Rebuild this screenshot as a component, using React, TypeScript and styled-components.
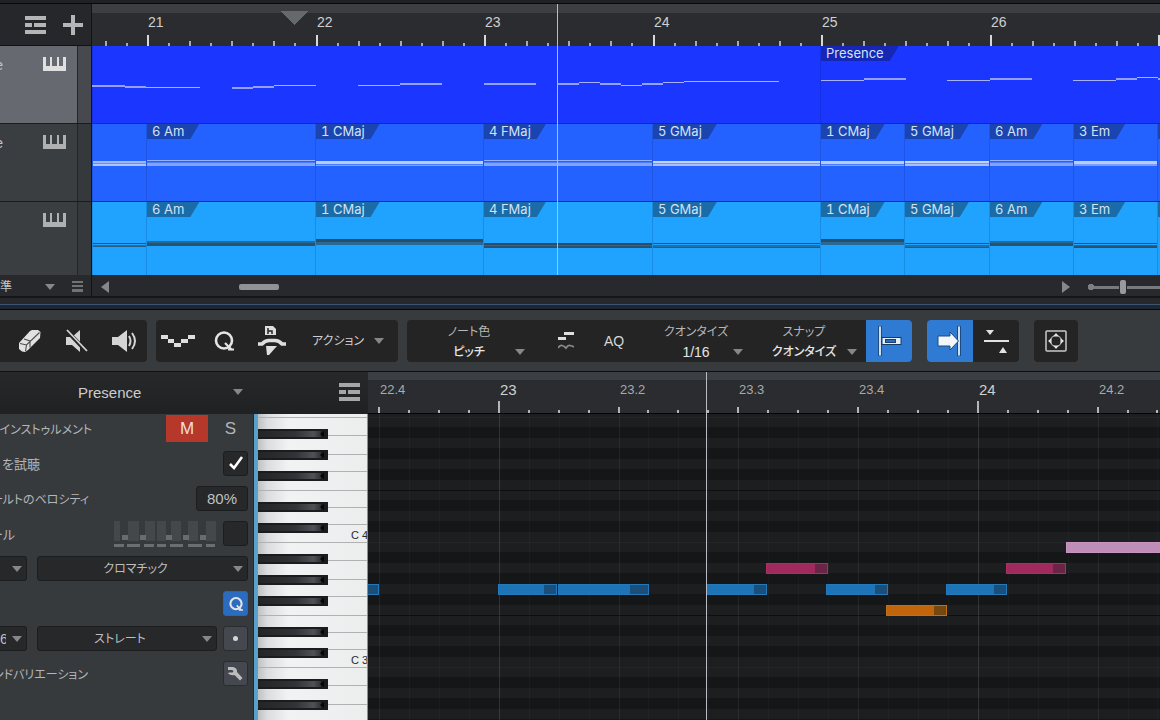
import React from "react";
import styled, { createGlobalStyle, css } from "styled-components";

const GlobalStyle = createGlobalStyle`
  *, *::before, *::after { box-sizing: border-box; }
  body {
    margin: 0;
    background: #1c1d1f;
    color: #c4c6c8;
    font-family: "Liberation Sans", "Noto Sans CJK JP", sans-serif;
    font-size: 14px;
  }
  button, select, input { font: inherit; color: inherit; margin: 0; }
  svg { display: block; flex: none; }
`;

/* ---------- timeline data ---------- */

const barX = (bar: number) => Math.round(55 + 168.5 * (bar - 21));
const clipX = (bar: number) => Math.max(0, barX(bar) - 1);

type Chord = { name: string; from: number; to: number };

const chords: Chord[] = [
  { name: "", from: 20, to: 21 },
  { name: "6 Am", from: 21, to: 22 },
  { name: "1 CMaj", from: 22, to: 23 },
  { name: "4 FMaj", from: 23, to: 24 },
  { name: "5 GMaj", from: 24, to: 25 },
  { name: "1 CMaj", from: 25, to: 25.5 },
  { name: "5 GMaj", from: 25.5, to: 26 },
  { name: "6 Am", from: 26, to: 26.5 },
  { name: "3 Em", from: 26.5, to: 27 },
];

type Stripe = [y: number, h: number, opacity: number];

const chordStripes: Record<string, Stripe[]> = {
  "": [[37, 2, 0.65], [39, 1, 0.35], [40, 2, 0.75]],
  "6 Am": [[36, 1, 0.6], [38, 1, 0.2], [39, 3, 0.5]],
  "1 CMaj": [[37, 3, 0.8], [40, 1, 0.2], [41, 1, 0.5]],
  "4 FMaj": [[36, 1, 0.6], [38, 1, 0.2], [39, 3, 0.5]],
  "5 GMaj": [[37, 2, 0.85], [39, 1, 0.4], [40, 2, 0.7]],
  "3 Em": [[37, 3, 0.8], [40, 2, 0.45]],
};

const bassStripes: Record<string, Stripe[]> = {
  "": [[41, 1, 0.85], [43, 1, 0.55], [44, 1, 0.75]],
  "6 Am": [[39, 2, 0.6], [41, 3, 0.85]],
  "1 CMaj": [[37, 3, 0.9], [40, 3, 0.6]],
  "4 FMaj": [[41, 2, 0.9], [43, 1, 0.6], [44, 2, 0.85]],
  "5 GMaj": [[41, 1, 0.85], [43, 2, 0.55], [45, 1, 0.75]],
  "3 Em": [[41, 1, 0.85], [43, 1, 0.6], [44, 2, 0.85]],
};

const melody: [from: number, to: number, y: number, h: number][] = [
  [0, 33, 39, 2], [33, 54, 40, 2], [54, 108, 41, 1], [140, 161, 41, 2], [161, 182, 40, 2],
  [182, 224, 39, 1], [266, 308, 39, 1], [308, 350, 37, 2], [392, 444, 37, 2], [465, 487, 37, 2],
  [487, 508, 36, 1], [508, 529, 37, 2], [529, 550, 39, 1], [550, 571, 37, 2], [571, 592, 36, 1],
  [592, 687, 35, 1], [729, 772, 34, 1], [772, 814, 32, 2], [855, 898, 34, 1], [898, 940, 32, 2],
  [981, 1024, 34, 1], [1024, 1045, 32, 2], [1045, 1066, 31, 1], [1066, 1100, 32, 2],
];

/* ---------- icons ---------- */

const Caret = () => (
  <svg width="10" height="6" viewBox="0 0 10 6"><path d="M0 0H10L5 6Z" fill="#85878a" /></svg>
);

const ListIcon = ({ fill = "#b4b5b6" }: { fill?: string }) => (
  <svg width="21" height="18" viewBox="0 0 21 18" fill={fill}>
    <path d="M0 0H21V4H0ZM0 7H7V11H0ZM9 7H21V11H9ZM0 14H21V18H0Z" />
  </svg>
);

const PlusIcon = () => (
  <svg width="20" height="20" viewBox="0 0 20 20"><path d="M8 0H12V8H20V12H12V20H8V12H0V8H8Z" fill="#b4b5b6" /></svg>
);

const KeysIcon = ({ fill }: { fill: string }) => (
  <svg width="23" height="14" viewBox="0 0 23 14">
    <path d="M0 0H3V9H7V0H9V9H14V0H16V9H20V0H23V14H0Z" fill={fill} />
  </svg>
);

const MenuIcon = () => (
  <svg width="11" height="12" viewBox="0 0 11 12"><path d="M0 0H11V2H0ZM0 4H11V6H0ZM0 8H11V11H0Z" fill="#707274" /></svg>
);

const EraserIcon = () => (
  <svg width="24" height="24" viewBox="0 0 24 24">
    <path d="M1 14L12 2L14 1L20 1L22.500 3L22 9L10 21L7 23L4 22.500L1 20Z" fill="#e2e2e2" />
    <path d="M2 14.500L8.500 16L21.500 3.500M8.500 16L7.500 22M6 10L12 12L12 18.500" fill="none" stroke="#4a4a4a" strokeWidth="1.1" />
  </svg>
);

const MuteIcon = () => (
  <svg width="24" height="24" viewBox="0 0 24 24">
    <path d="M1 8H7L15 1V23L7 16H1Z" fill="#d4d4d4" />
    <path d="M1 1L22 23" stroke="#242424" strokeWidth="4" />
    <path d="M2 1L22 22" stroke="#d4d4d4" strokeWidth="1.8" />
  </svg>
);

const SpeakerIcon = () => (
  <svg width="26" height="24" viewBox="0 0 26 24">
    <path d="M1 8H7L16 1V23L7 16H1Z" fill="#d4d4d4" />
    <path d="M18 7Q21 12 18 17M21 4Q27 12 21 20" fill="none" stroke="#d4d4d4" strokeWidth="2" />
  </svg>
);

const StepsIcon = () => (
  <svg width="34" height="14" viewBox="0 0 34 14" fill="#dedede">
    <path d="M0 1H7V5H0ZM7 5H13V9H7ZM13 9H20V13H13ZM20 5H27V9H20ZM27 1H34V5H27Z" />
  </svg>
);

const QIcon = ({ size = 20, weight = 2.6 }: { size?: number; weight?: number }) => (
  <svg width={size} height={size} viewBox="0 0 20 20" fill="none" stroke="#e4e4e4" strokeWidth={weight}>
    <circle cx="10" cy="9.5" r="8" />
    <path d="M11 12L18 19M14 18.500H20" strokeWidth="2.2" />
  </svg>
);

const HumanizeIcon = () => (
  <svg width="30" height="30" viewBox="0 0 30 30">
    <path d="M8 0H16L19 3V9H8Z" fill="#dedede" />
    <path d="M11 2V8M11 5H15V8" fill="none" stroke="#242424" strokeWidth="1.5" />
    <path d="M1 18H5Q8 14.500 12 14.500H18Q22 14.500 25 18H29" fill="none" stroke="#dedede" strokeWidth="3.6" />
    <path d="M9 20H20L12 29H10Z" fill="#dedede" />
  </svg>
);

const NoteWaveIcon = () => (
  <svg width="16" height="18" viewBox="0 0 16 18">
    <path d="M6 0H16V3H6ZM0 5H8V8H0Z" fill="#dedede" />
    <path d="M0 16Q2 13 4 13.500T8 16Q10 13 12 13.500T16 15" fill="none" stroke="#8a8a8a" strokeWidth="1.8" />
  </svg>
);

const SnapStartIcon = () => (
  <svg width="26" height="32" viewBox="-2 0 26 32">
    <path d="M2 1V31" stroke="#1d4a82" strokeWidth="4" />
    <path d="M2 1.500V30.500" stroke="#cfdff2" strokeWidth="2" />
    <rect x="4" y="12.500" width="19" height="7" fill="#e4eefa" stroke="#163a66" />
    <rect x="7.500" y="14.500" width="10" height="3" fill="#2c6db8" stroke="#1a3f70" strokeWidth="1" />
  </svg>
);

const SnapEndIcon = () => (
  <svg width="26" height="32" viewBox="0 0 26 32">
    <path d="M22 1V31" stroke="#1d4a82" strokeWidth="4" />
    <path d="M22 1.500V30.500" stroke="#cfdff2" strokeWidth="2" />
    <path d="M1 11H13V7L21.500 16L13 25V21H1Z" fill="#f2f7fd" stroke="#1a4a80" />
  </svg>
);

const SplitIcon = () => (
  <svg width="28" height="24" viewBox="-2 0 28 24" fill="#e2e2e2">
    <path d="M2 1H10L6 6ZM0 11H25V13H0ZM15 24H23L19 18Z" />
  </svg>
);

const TargetIcon = () => (
  <svg width="22" height="22" viewBox="0 0 22 22">
    <rect x="1" y="1" width="20" height="20" rx="1" fill="none" stroke="#c8c8c8" strokeWidth="1.5" />
    <circle cx="11" cy="11" r="5.500" fill="none" stroke="#a8a8a8" strokeWidth="1.2" />
    <path d="M8 6.500L11 3L14 6.500ZM8 15.500L11 19L14 15.500ZM6.500 8L3 11L6.500 14ZM15.500 8L19 11L15.500 14Z" fill="#e2e2e2" />
  </svg>
);

const WrenchIcon = () => (
  <svg width="15" height="15" viewBox="0 0 15 15">
    <path d="M0 1H5Q9.500 2 9 6L14.500 12L12 14.500L6.500 9Q3 10 0 7.500L1 6.500H4.500Q6 5.500 5 4.500L4 4H0Z" fill="#bcbcbe" />
  </svg>
);

const MiniKeyboard = () => (
  <svg width="102" height="26" viewBox="0 0 102 26">
    {[[0, 6], [14, 11], [31, 10], [43, 9], [57, 10], [74, 10], [92, 10]].map(([x, w]) => (
      <rect key={x} x={x} y="0" width={w} height="20" fill="#45484b" />
    ))}
    {[8, 26, 52, 69, 86].map((x) => (
      <rect key={x} x={x} y="14" width="6" height="5" fill="#696c6f" />
    ))}
    {[[0, 10], [13, 13], [30, 10], [43, 9], [56, 13], [74, 14], [92, 9]].map(([x, w]) => (
      <rect key={x} x={x} y="23" width={w} height="3" fill="#6b6e71" />
    ))}
  </svg>
);

/* ---------- arrangement ---------- */

const Workspace = styled.main`
  display: flex;
  flex-direction: column;
  height: 100vh;
  overflow: hidden;
`;

const TopEdge = styled.div`
  flex: none;
  height: 4px;
  background: #1f2124;
  border-bottom: 1px solid #08090a;
`;

const Arrange = styled.section`
  display: grid;
  grid-template-columns: 92px minmax(0, 1fr);
  flex: none;
`;

const HeadColumn = styled.div`
  display: flex;
  flex-direction: column;
  border-right: 1px solid #121314;
`;

const HeadTools = styled.div`
  display: flex;
  align-items: center;
  justify-content: flex-end;
  gap: 17px;
  height: 42px;
  padding-right: 8px;
  background: #25272a;
  border-bottom: 1px solid #101112;
`;

const PlainButton = styled.button`
  padding: 0;
  border: 0;
  background: none;
`;

const TrackHead = styled.div<{ $selected?: boolean; $last?: boolean }>`
  display: flex;
  height: ${(p) => (p.$last ? 73 : 78)}px;
  background: ${(p) => (p.$selected ? "#66696f" : "#3b3e40")};
  border-bottom: ${(p) => (p.$last ? 0 : 1)}px solid #1b1c1e;
`;

const TrackName = styled.span`
  display: flex;
  justify-content: flex-end;
  width: 3px;
  overflow: hidden;
  padding-top: 10px;
  margin-right: 40px;
  line-height: 18px;
`;

const TrackIcon = styled.span`
  padding-top: 11px;
  width: 34px;
`;

const TrackMeter = styled.span<{ $selected?: boolean }>`
  flex: 1;
  background: ${(p) => (p.$selected ? "#47494f" : "#36393b")};
  border-left: 1px solid #242628;
`;

const HeadFoot = styled.div`
  display: flex;
  align-items: center;
  height: 23px;
  background: #27292c;
  border-bottom: 2px solid #141517;
  padding: 2px 8px 0 0;
`;

const FootSelect = styled.label`
  display: flex;
  align-items: center;
  flex: 1;
  font-size: 12px;
`;

const bareSelect = css`
  appearance: none;
  border: 0;
  border-radius: 0;
  padding: 0;
  background: none;
  font-feature-settings: "palt";
  outline: 0;
`;

const PresetSelect = styled.select`
  ${bareSelect}
  width: 45px;
`;

const LaneColumn = styled.div`
  display: flex;
  flex-direction: column;
  min-width: 0;
`;

const Timeline = styled.div`
  position: relative;
  overflow: hidden;
`;

const Ruler = styled.div`
  position: relative;
  display: flex;
  height: 42px;
  background: linear-gradient(#3c3e41 0 9px, #2b2c2f 9px);
`;

const RulerCell = styled.span<{ $w: number; $minor?: boolean; $size: number }>`
  flex: none;
  width: ${(p) => p.$w}px;
  padding: 9px 0 0 1px;
  line-height: 18px;
  font-size: ${(p) => p.$size}px;
  color: ${(p) => (p.$minor ? "#a8aaac" : "#cfd0d1")};
`;

const TickLayer = styled.svg`
  position: absolute;
  left: 0;
  bottom: 0;
  width: 100%;
  height: 100%;
`;

const Lane = styled.div<{ $color: string; $last?: boolean }>`
  position: relative;
  display: flex;
  height: ${(p) => (p.$last ? 73 : 78)}px;
  background: ${(p) => p.$color};
  border-bottom: ${(p) => (p.$last ? 0 : 1)}px solid #12309c;
`;

const Clip = styled.div<{ $w: number }>`
  flex: none;
  width: ${(p) => p.$w}px;
  position: relative;
  border-left: 1px solid rgba(0, 20, 80, 0.16);
`;

const ClipTag = styled.span<{ $color: string }>`
  display: inline-block;
  height: 15px;
  line-height: 14px;
  padding: 0 15px 0 5px;
  vertical-align: top;
  font-family: Inter, sans-serif;
  font-size: 13px;
  font-variant-numeric: tabular-nums;
  color: #d3e2f8;
  background: ${(p) => p.$color};
  clip-path: polygon(0 0, 100% 0, calc(100% - 9px) 100%, 0 100%);
`;

const Layer = styled.svg`
  position: absolute;
  inset: 0;
  width: 100%;
  height: 100%;
`;

const Playhead = styled.div<{ $x: number }>`
  position: absolute;
  top: 0;
  bottom: 0;
  left: ${(p) => p.$x}px;
  width: 1px;
  background: #b9bcc2;
`;

const ScrollRow = styled.div`
  display: flex;
  align-items: center;
  height: 23px;
  padding: 2px 0 0 9px;
  background: #27292c;
  border-bottom: 2px solid #141517;
`;

const ScrollTrack = styled.div`
  flex: 1;
  padding-left: 130px;
`;

const ScrollThumb = styled.div`
  width: 40px;
  height: 6px;
  border-radius: 2px;
  background: #919295;
`;

const ZoomSlider = styled.input`
  appearance: none;
  width: 72px;
  height: 16px;
  margin-left: 18px;
  background:
    radial-gradient(circle at 3px 8px, #7d7f82 3px, transparent 3px),
    linear-gradient(#77797c, #77797c) 2px 7px / 100% 3px no-repeat;
  &::-webkit-slider-thumb {
    appearance: none;
    width: 6px;
    height: 14px;
    border-radius: 2px;
    background: #97999c;
    box-shadow: 0 0 0 1px #27292c;
  }
`;

const Splitter = styled.div`
  flex: none;
  height: 12px;
  background: linear-gradient(#26282b 0 6px, #3a5573 6px 7px, #1c2530 7px 11px, #070809 11px);
`;

/* ---------- toolbar ---------- */

const Toolbar = styled.header`
  display: flex;
  flex: none;
  align-items: center;
  height: 62px;
  background: #383b3e;
  border-bottom: 1px solid #0f1011;
`;

const ToolGroup = styled.div<{ $ml?: number; $pl?: number; $open?: boolean }>`
  display: flex;
  flex: none;
  height: 42px;
  margin-left: ${(p) => p.$ml ?? 0}px;
  padding-left: ${(p) => p.$pl ?? 0}px;
  background: #242424;
  border-radius: ${(p) => (p.$open ? "0 4px 4px 0" : "4px")};
  overflow: hidden;
`;

const ToolButton = styled.button<{ $w: number; $on?: boolean }>`
  display: flex;
  align-items: center;
  justify-content: center;
  width: ${(p) => p.$w}px;
  height: 42px;
  padding: 0;
  border: 0;
  color: #d6d6d6;
  background: ${(p) => (p.$on ? "#2f7bd4" : "none")};
`;

const ActionSelect = styled.label`
  display: flex;
  align-items: center;
  width: 102px;
  padding-left: 16px;
  font-size: 12px;
  color: #cfcfcf;
  select { ${bareSelect} width: 62px; }
`;

const ToolField = styled.label<{ $w: number; $ml?: number }>`
  position: relative;
  display: flex;
  flex-direction: column;
  width: ${(p) => p.$w}px;
  margin-left: ${(p) => p.$ml ?? 0}px;
  padding: 2px 18px 0 0;
  font-size: 12px;
  line-height: 20px;
  text-align: center;
  font-feature-settings: "palt";
  color: #b4b6b7;
  select {
    ${bareSelect}
    width: 100%;
    height: 20px;
    text-align-last: center;
    color: #e6e6e6;
    font-size: 12px;
    font-weight: 500;
  }
  select.num { font-size: 14px; }
  svg { position: absolute; right: 9px; bottom: 7px; }
`;

const Gap = styled.span<{ $w: number }>`
  flex: none;
  width: ${(p) => p.$w}px;
`;

/* ---------- editor ---------- */

const Editor = styled.section`
  display: grid;
  grid-template-columns: 368px minmax(0, 1fr);
  grid-template-rows: minmax(0, 1fr);
  flex: 1;
  min-height: 0;
`;

const Side = styled.div`
  display: flex;
  flex-direction: column;
  min-height: 0;
`;

const SideHead = styled.div`
  display: flex;
  align-items: center;
  flex: none;
  height: 42px;
  padding: 0 8px 2px 78px;
  background: linear-gradient(#26282a, #202123);
  label { display: flex; align-items: center; flex: 1; }
  select { ${bareSelect} width: 155px; font-size: 15px; color: #cccdce; }
`;

const SideBody = styled.div`
  display: grid;
  grid-template-columns: 253px 115px;
  grid-template-rows: minmax(0, 1fr);
  flex: 1;
  min-height: 0;
`;

const Panel = styled.div`
  display: flex;
  flex-direction: column;
  overflow: hidden;
  padding-right: 5px;
  background: #373a3d;
`;

const PanelRow = styled.div<{ $first?: boolean }>`
  display: flex;
  flex: none;
  align-items: center;
  height: ${(p) => (p.$first ? 32 : 35)}px;
  padding-bottom: ${(p) => (p.$first ? 3 : 0)}px;
`;

const RowLabel = styled.label<{ $w: number }>`
  display: flex;
  justify-content: flex-end;
  width: ${(p) => p.$w}px;
  margin-right: auto;
  font-size: ${(p) => (p.$w < 50 ? 13 : 12)}px;
  white-space: nowrap;
  font-feature-settings: "palt";
  color: #b4b6b8;
`;

const MuteButton = styled.button<{ $on?: boolean }>`
  width: ${(p) => (p.$on ? 42 : 40)}px;
  height: 27px;
  padding: ${(p) => (p.$on ? "0" : "0 0 0 5px")};
  border: 0;
  font-size: 17px;
  color: ${(p) => (p.$on ? "#eedfdc" : "#b4b6b8")};
  background: ${(p) => (p.$on ? "#b5382b" : "none")};
`;

const TickBox = styled.input`
  appearance: none;
  width: 25px;
  height: 25px;
  border: 1px solid #1c1d1f;
  border-radius: 3px;
  background: #27282a;
  &:checked {
    background: #27282a
      url("data:image/svg+xml,%3Csvg xmlns='http://www.w3.org/2000/svg' viewBox='0 0 25 25'%3E%3Cpath d='M7 13L11 17L19 6' fill='none' stroke='%23fff' stroke-width='2.500'/%3E%3C/svg%3E")
      center / 25px;
  }
`;

const VelocityInput = styled.input`
  width: 52px;
  height: 25px;
  padding: 0;
  border: 1px solid #1c1d1f;
  border-radius: 3px;
  background: #27282a;
  text-align: center;
  font-size: 15px;
  color: #bfc1c2;
`;

const PanelSelect = styled.label<{ $w: number; $edge?: boolean }>`
  position: relative;
  width: ${(p) => p.$w}px;
  svg { position: absolute; right: 5px; top: 10px; }
  select {
    ${bareSelect}
    display: block;
    width: 100%;
    height: 25px;
    padding-right: ${(p) => (p.$edge ? 20 : 14)}px;
    border: 1px solid #1c1d1f;
    border-left-width: ${(p) => (p.$edge ? 0 : 1)}px;
    border-radius: ${(p) => (p.$edge ? "0 3px 3px 0" : "3px")};
    background: #27282a;
    font-size: ${(p) => (p.$edge ? 14 : 12)}px;
    text-align-last: ${(p) => (p.$edge ? "right" : "center")};
    color: #bcbec0;
  }
`;

const SquareButton = styled.button<{ $on?: boolean }>`
  display: flex;
  align-items: center;
  justify-content: center;
  width: 25px;
  height: 25px;
  margin-left: auto;
  padding: 0;
  border: 1px solid ${(p) => (p.$on ? "#2a65b0" : "#2a2c2f")};
  border-radius: 3px;
  background: ${(p) => (p.$on ? "#2c6cc0" : "#45484e")};
`;

const Piano = styled.svg`
  width: 100%;
  height: 100%;
  border-left: 1px solid #10304a;
`;

const Roll = styled.div`
  position: relative;
  display: flex;
  flex-direction: column;
  min-height: 0;
  overflow: hidden;
`;

const RollRuler = styled(Ruler)`
  flex: none;
  background: linear-gradient(#3b3e42 0 8px, #2a2c2f 8px);
  border-bottom: 1px solid #050505;
`;

const RollGrid = styled.div`
  position: relative;
  flex: 1;
  min-height: 0;
  background: #1d1e1f;
`;

/* ---------- drawn parts ---------- */

const OCTAVE = 125;
const ROW = OCTAVE / 12;
const octaves = Array.from({ length: 12 }, (_, i) => i);
/* top of the B row that opens each octave, measured from the top of the keyboard */
const octaveTop = (i: number) => 3 + i * OCTAVE;
const blackRows = [1, 3, 5, 8, 10];
const whiteSeams = [0, 18, 37, 54, 73, 90, 107];

const PianoKeys = () => (
  <Piano aria-label="Keyboard">
    <defs>
      <linearGradient id="white" x1="0" x2="1">
        <stop offset="0" stopColor="#b4b5b6" />
        <stop offset="0.12" stopColor="#dcddde" />
        <stop offset="0.3" stopColor="#f1f2f3" />
        <stop offset="1" stopColor="#eceded" />
      </linearGradient>
      <linearGradient id="black" x1="0" x2="1">
        <stop offset="0" stopColor="#232425" />
        <stop offset="0.6" stopColor="#323337" />
        <stop offset="0.88" stopColor="#505157" />
        <stop offset="1" stopColor="#303134" />
      </linearGradient>
    </defs>
    <rect width="100%" height="100%" fill="url(#white)" />
    {octaves.map((i) => (
      <g key={i} transform={`translate(0 ${octaveTop(i)})`}>
        {whiteSeams.map((y) => (
          <rect key={y} x="4" y={y} width="110" height="1" fill="#b0b1b2" />
        ))}
        {blackRows.map((r) => {
          const y = Math.round(r * ROW) + 2;
          return (
            <g key={r}>
              <rect x="4" y={y} width="70" height="10" fill="#1b1c1e" />
              <rect x="4" y={y + 2} width="63" height="6" fill="url(#black)" />
              <path d={`M66 ${y + 5}L70 ${y + 2}V${y + 8}Z`} fill="#050505" />
            </g>
          );
        })}
        <text x="97" y="122" fontSize="11" fill="#2a2b2c">{`C ${4 - i}`}</text>
      </g>
    ))}
    <rect width="4" height="100%" fill="#5aa2cb" />
    <rect x="113" width="1" height="100%" fill="#8d8e8f" />
  </Piano>
);

const palette = {
  blue: ["#1d74b6", "#1c4e7a", "#2379ba"],
  crimson: ["#a12a5c", "#6b2446", "#a83062"],
  orange: ["#c0650c", "#75480f", "#c56d18"],
  pink: ["#be8db8", "#be8db8", "#c594bf"],
};

const notes: { x: number; w: number; row: number; c: keyof typeof palette }[] = [
  { x: -40, w: 51, row: 16, c: "blue" },
  { x: 130, w: 59, row: 16, c: "blue" },
  { x: 190, w: 91, row: 16, c: "blue" },
  { x: 338, w: 61, row: 16, c: "blue" },
  { x: 398, w: 62, row: 14, c: "crimson" },
  { x: 458, w: 62, row: 16, c: "blue" },
  { x: 518, w: 61, row: 18, c: "orange" },
  { x: 578, w: 61, row: 16, c: "blue" },
  { x: 638, w: 60, row: 14, c: "crimson" },
  { x: 698, w: 240, row: 12, c: "pink" },
];

const stepX = (i: number) => Math.round(11 + 29.94 * i);
const steps = Array.from({ length: 120 }, (_, i) => i);
const beatNames = ["22.4", "23", "23.2", "23.3", "23.4", "24", "24.2"];

const RollCanvas = () => (
  <Layer shapeRendering="crispEdges" aria-label="Notes">
    {octaves.map((i) => (
      <g key={i} transform={`translate(0 ${octaveTop(i)})`}>
        {blackRows.map((r) => (
          <rect key={r} y={Math.round(r * ROW)} width="100%" height="11" fill="#151617" />
        ))}
        <rect y="0" width="100%" height="1" fill="#242526" />
        <rect y="73" width="100%" height="1" fill="#0d0e0f" />
      </g>
    ))}
    {steps.map((i) => (
      <rect
        key={i}
        x={stepX(i)}
        width="1"
        height="100%"
        fill="#fff"
        opacity={i % 16 === 4 ? 0.12 : i % 4 === 0 ? 0.06 : 0.025}
      />
    ))}
    {notes.map((n) => {
      const [body, tail, edge] = palette[n.c];
      const y = 3 + Math.round(n.row * ROW);
      const t = Math.round(n.w * 0.2);
      return (
        <g key={n.x}>
          <rect x={n.x} y={y} width={n.w} height="11" fill={edge} />
          <rect x={n.x + 1} y={y + 1} width={n.w - 2} height="9" fill={body} />
          <rect x={n.x + n.w - t - 1} y={y + 1} width={t} height="9" fill={tail} />
        </g>
      );
    })}
  </Layer>
);

const ArrangeTicks = () => (
  <TickLayer shapeRendering="crispEdges">
    {Array.from({ length: 160 }, (_, i) => {
      const h = i % 8 === 0 ? 11 : i % 2 === 0 ? 5 : 3;
      return <rect key={i} x={barX(20 + i / 8)} y={42 - h} width="2" height={h} fill={h > 9 ? "#d8d8d8" : "#a9aaab"} />;
    })}
    <path d="M188 7H216L202 21Z" fill="#66696c" />
  </TickLayer>
);

const ChordLane = ({ color, tag, ink, stripes, last }: {
  color: string; tag: string; ink: string; stripes: Record<string, Stripe[]>; last?: boolean;
}) => (
  <Lane $color={color} $last={last}>
    {chords.map((c) => (
      <Clip key={c.from} $w={clipX(c.to) - clipX(c.from)}>
        <Layer shapeRendering="crispEdges">
          {stripes[c.name].map(([y, h, o]) => (
            <rect key={y} y={y} width="100%" height={h} fill={ink} opacity={o} />
          ))}
        </Layer>
        {c.name && <ClipTag $color={tag}>{c.name}</ClipTag>}
      </Clip>
    ))}
    <Clip $w={169}><ClipTag $color={tag} /></Clip>
  </Lane>
);

/* ---------- page ---------- */

export default function App() {
  return (
    <Workspace>
      <GlobalStyle />
      <TopEdge />
      <Arrange>
        <HeadColumn>
          <HeadTools>
            <PlainButton aria-label="Track list"><ListIcon /></PlainButton>
            <PlainButton aria-label="Add track"><PlusIcon /></PlainButton>
          </HeadTools>
          <TrackHead $selected>
            <TrackName>e</TrackName>
            <TrackIcon><KeysIcon fill="#e0e0e1" /></TrackIcon>
            <TrackMeter $selected />
          </TrackHead>
          <TrackHead>
            <TrackName>e</TrackName>
            <TrackIcon><KeysIcon fill="#aeb0b1" /></TrackIcon>
            <TrackMeter />
          </TrackHead>
          <TrackHead $last>
            <TrackName />
            <TrackIcon><KeysIcon fill="#aeb0b1" /></TrackIcon>
            <TrackMeter />
          </TrackHead>
          <HeadFoot>
            <FootSelect>
              <PresetSelect aria-label="Preset"><option>準</option></PresetSelect>
              <Caret />
            </FootSelect>
            <PlainButton aria-label="Menu"><MenuIcon /></PlainButton>
          </HeadFoot>
        </HeadColumn>

        <LaneColumn>
          <Timeline>
            <Ruler>
              {[20, 21, 22, 23, 24, 25, 26].map((bar) => (
                <RulerCell key={bar} $size={14} $w={barX(bar + 1) - Math.max(0, barX(bar))}>
                  {bar > 20 && bar}
                </RulerCell>
              ))}
              <ArrangeTicks />
            </Ruler>
            <Lane $color="#1a36ff">
              <Clip $w={clipX(25)} />
              <Clip $w={900}>
                <ClipTag $color="#1527b4">Presence</ClipTag>
              </Clip>
              <Layer shapeRendering="crispEdges">
                {melody.map(([a, b, y, h]) => (
                  <rect key={a} x={a} y={y} width={b - a} height={h} fill="#d5dcff" opacity={h === 1 ? 0.75 : 0.65} />
                ))}
              </Layer>
            </Lane>
            <ChordLane color="#2462ff" tag="#1a45b0" ink="#dfe6ff" stripes={chordStripes} />
            <ChordLane color="#20a2ff" tag="#1a6ca8" ink="#2b4456" stripes={bassStripes} last />
            <Playhead $x={465} />
          </Timeline>
          <ScrollRow>
            <PlainButton aria-label="Scroll left">
              <svg width="8" height="12" viewBox="0 0 8 12"><path d="M8 0V12L0 6Z" fill="#85878a" /></svg>
            </PlainButton>
            <ScrollTrack><ScrollThumb /></ScrollTrack>
            <PlainButton aria-label="Scroll right">
              <svg width="8" height="12" viewBox="0 0 8 12"><path d="M0 0V12L8 6Z" fill="#85878a" /></svg>
            </PlainButton>
            <ZoomSlider type="range" aria-label="Zoom" defaultValue={48} />
          </ScrollRow>
        </LaneColumn>
      </Arrange>
      <Splitter />

      <Toolbar>
        <ToolGroup $pl={6} $open>
          <ToolButton $w={47} aria-label="Eraser"><EraserIcon /></ToolButton>
          <ToolButton $w={47} aria-label="Mute"><MuteIcon /></ToolButton>
          <ToolButton $w={47} aria-label="Listen"><SpeakerIcon /></ToolButton>
        </ToolGroup>
        <ToolGroup $ml={9}>
          <ToolButton $w={44} aria-label="Steps"><StepsIcon /></ToolButton>
          <ToolButton $w={48} aria-label="Quantize"><QIcon /></ToolButton>
          <ToolButton $w={48} aria-label="Humanize"><HumanizeIcon /></ToolButton>
          <ActionSelect>
            <select aria-label="Action"><option>アクション</option></select>
            <Caret />
          </ActionSelect>
        </ToolGroup>
        <ToolGroup $ml={9} $pl={15}>
          <ToolField $w={112}>
            ノート色
            <select><option>ピッチ</option></select>
            <Caret />
          </ToolField>
          <Gap $w={8} />
          <ToolButton $w={48} aria-label="Ghost notes"><NoteWaveIcon /></ToolButton>
          <ToolButton $w={48}>AQ</ToolButton>
          <ToolField $w={94} $ml={20}>
            クオンタイズ
            <select className="num"><option>1/16</option></select>
            <Caret />
          </ToolField>
          <ToolField $w={106} $ml={8}>
            スナップ
            <select><option>クオンタイズ</option></select>
            <Caret />
          </ToolField>
          <ToolButton $w={46} $on aria-label="Snap to start"><SnapStartIcon /></ToolButton>
        </ToolGroup>
        <ToolGroup $ml={15}>
          <ToolButton $w={46} $on aria-label="Autoscroll"><SnapEndIcon /></ToolButton>
          <ToolButton $w={46} aria-label="Split view"><SplitIcon /></ToolButton>
        </ToolGroup>
        <ToolGroup $ml={15}>
          <ToolButton $w={44} aria-label="Fit view"><TargetIcon /></ToolButton>
        </ToolGroup>
      </Toolbar>

      <Editor>
        <Side>
          <SideHead>
            <label>
              <select aria-label="Instrument"><option>Presence</option></select>
              <Caret />
            </label>
            <PlainButton aria-label="Lanes"><ListIcon fill="#a4a6a8" /></PlainButton>
          </SideHead>
          <SideBody>
            <Panel>
              <PanelRow $first>
                <RowLabel $w={92}>インストゥルメント</RowLabel>
                <MuteButton $on>M</MuteButton>
                <MuteButton>S</MuteButton>
              </PanelRow>
              <PanelRow>
                <RowLabel $w={40} htmlFor="audition">を試聴</RowLabel>
                <TickBox id="audition" type="checkbox" defaultChecked />
              </PanelRow>
              <PanelRow>
                <RowLabel $w={89} htmlFor="velocity">ォルトのベロシティ</RowLabel>
                <VelocityInput id="velocity" defaultValue="80%" />
              </PanelRow>
              <PanelRow>
                <RowLabel $w={15} htmlFor="scale">ール</RowLabel>
                <MiniKeyboard />
                <Gap $w={7} />
                <TickBox id="scale" type="checkbox" />
              </PanelRow>
              <PanelRow>
                <PanelSelect $w={27} $edge>
                  <select aria-label="Root"><option></option></select>
                  <Caret />
                </PanelSelect>
                <Gap $w={10} />
                <PanelSelect $w={211}>
                  <select aria-label="Scale type"><option>クロマチック</option></select>
                  <Caret />
                </PanelSelect>
              </PanelRow>
              <PanelRow>
                <SquareButton $on aria-label="Quantize on"><QIcon size={14} weight={3} /></SquareButton>
              </PanelRow>
              <PanelRow>
                <PanelSelect $w={27} $edge>
                  <select aria-label="Value"><option>6</option></select>
                  <Caret />
                </PanelSelect>
                <Gap $w={10} />
                <PanelSelect $w={180}>
                  <select aria-label="Feel"><option>ストレート</option></select>
                  <Caret />
                </PanelSelect>
                <SquareButton aria-label="Dotted">
                  <svg width="5" height="5" viewBox="0 0 5 5"><circle cx="2.500" cy="2.500" r="2.500" fill="#d4d5d6" /></svg>
                </SquareButton>
              </PanelRow>
              <PanelRow>
                <RowLabel $w={88}>ンドバリエーション</RowLabel>
                <SquareButton aria-label="Settings"><WrenchIcon /></SquareButton>
              </PanelRow>
            </Panel>
            <PianoKeys />
          </SideBody>
        </Side>
        <Roll>
          <RollRuler>
            <RulerCell $size={14} $w={11} />
            {beatNames.map((b, i) => (
              <RulerCell
                key={b}
                $size={b.includes(".") ? 13 : 15}
                $minor={b.includes(".")}
                $w={stepX(i * 4 + 4) - stepX(i * 4)}
              >
                {b}
              </RulerCell>
            ))}
            <TickLayer shapeRendering="crispEdges">
              {steps.map((i) => {
                const h = i % 16 === 4 ? 12 : i % 4 === 0 ? 6 : 3;
                return <rect key={i} x={stepX(i) - 1} y={41 - h} width="2" height={h} fill="#b5b6b8" />;
              })}
            </TickLayer>
          </RollRuler>
          <RollGrid><RollCanvas /></RollGrid>
          <Playhead $x={338} />
        </Roll>
      </Editor>
    </Workspace>
  );
}
